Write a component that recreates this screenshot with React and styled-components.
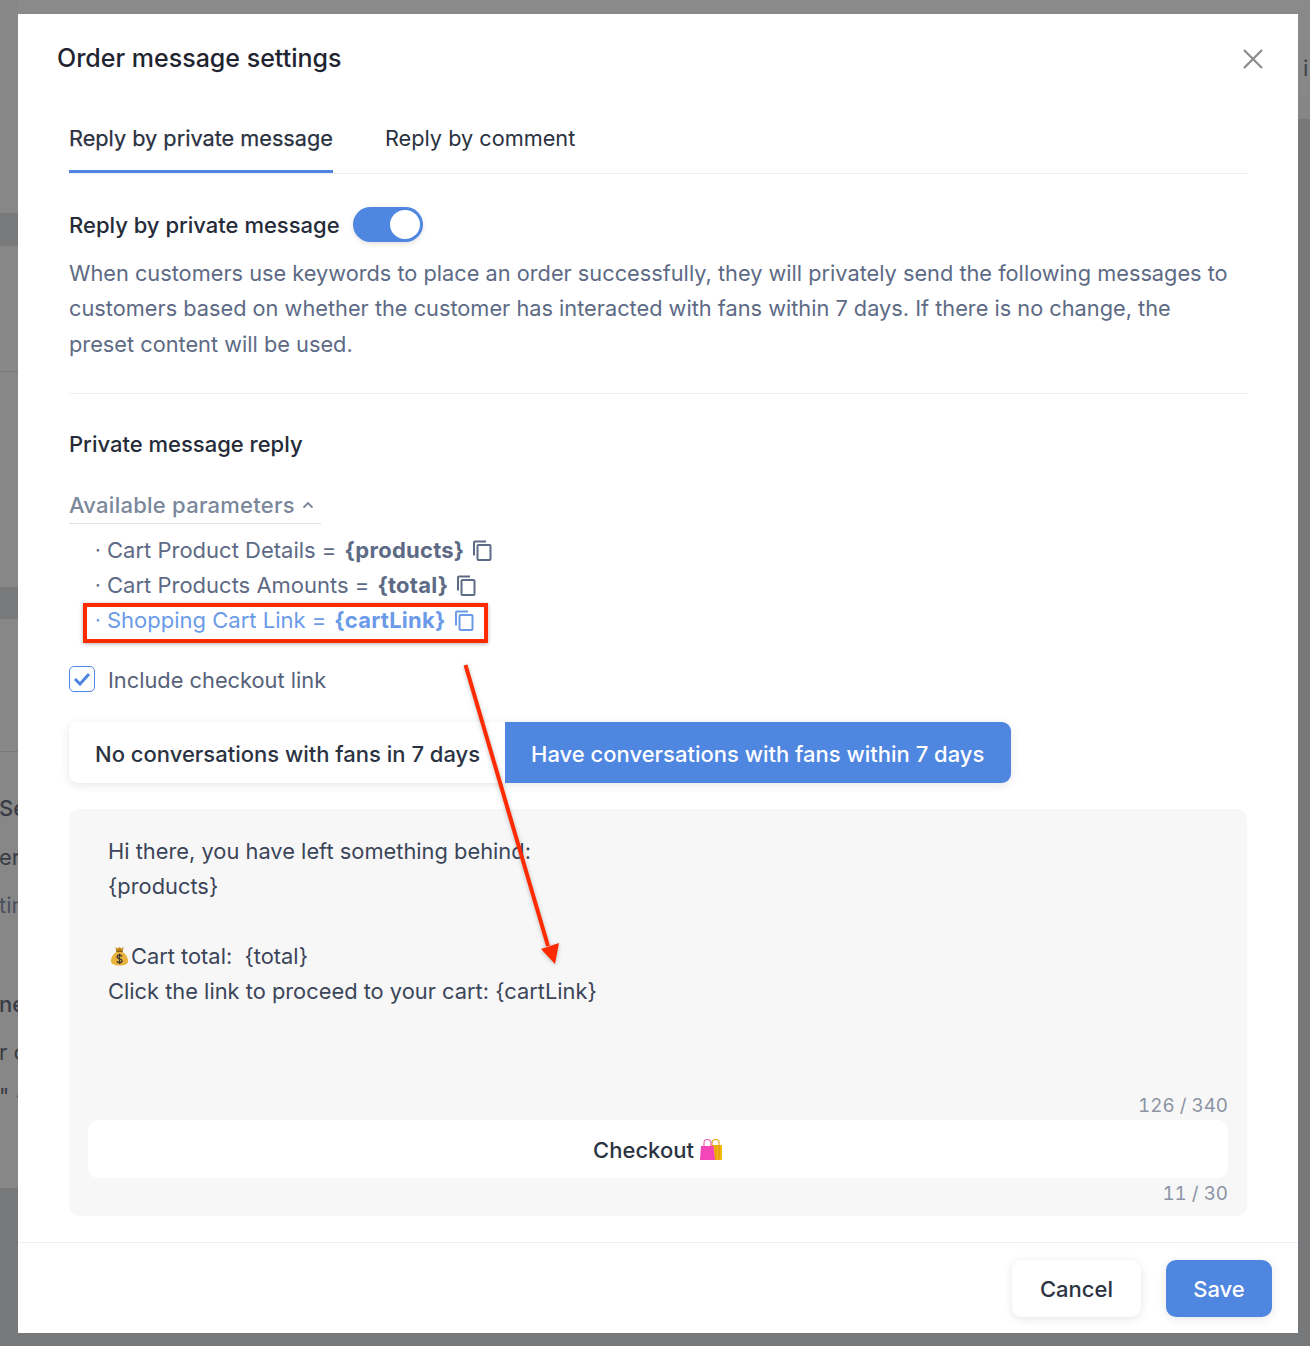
import styled, { createGlobalStyle } from "styled-components";

const blue = "#4f86e0";

const GlobalStyle = createGlobalStyle`
  html, body { margin: 0; padding: 0; }
  body { font-family: Inter, "Liberation Sans", sans-serif; }
  * { box-sizing: border-box; }
`;

const Page = styled.div`
  position: relative;
  width: 1310px;
  height: 1346px;
  display: grid;
  grid-template-columns: 18px 1280px 12px;
  overflow: hidden;
`;

const SideLeft = styled.div`
  display: flex;
  flex-direction: column;
  background: #878787;
  overflow: hidden;
  white-space: pre;
`;

const Band = styled.div`
  height: ${(p) => p.$h}px;
  margin-top: ${(p) => p.$top}px;
  background: #797a7c;
`;

const Rule = styled.div`
  height: 1px;
  margin-top: ${(p) => p.$top}px;
  background: #797979;
`;

const PeekText = styled.div`
  height: 30px;
  line-height: 30px;
  margin-top: ${(p) => p.$top}px;
  margin-left: -1px;
  font-size: 22px;
  font-weight: ${(p) => (p.$bold ? 500 : 400)};
  color: ${(p) => p.$color || "#383c46"};
`;

const BottomFill = styled.div`
  flex: 1;
  margin-top: ${(p) => p.$top || 0}px;
  background: #77787a;
`;

const Center = styled.div`
  display: flex;
  flex-direction: column;
`;

const TopStrip = styled.div`
  height: 14px;
  background: #8a8a8a;
`;

const SideRight = styled.div`
  display: flex;
  flex-direction: column;
  overflow: hidden;
`;

const SideRightTop = styled.div`
  height: 119px;
  padding: 54px 0 0 5px;
  background: linear-gradient(#8a8a8a, #868686);
  font-size: 22px;
  line-height: 28px;
  color: #3e424c;
`;

const Modal = styled.div`
  width: 1280px;
  height: 1319px;
  background: #fff;
  border-radius: 9px;
  display: flex;
  flex-direction: column;
`;

const Header = styled.div`
  height: 88px;
  flex: none;
  padding: 0 35px 0 39px;
  display: flex;
  align-items: center;
  justify-content: space-between;
`;

const Title = styled.div`
  font-size: 25px;
  font-weight: 500;
  color: #1f2530;
`;

const CloseIcon = styled.svg`
  margin-top: 2px;
`;

const Body = styled.div`
  flex: 1;
  padding: 0 51px;
  display: flex;
  flex-direction: column;
`;

const TabBar = styled.div`
  height: 72px;
  flex: none;
  display: flex;
  gap: 52px;
  border-bottom: 1px solid #eceef1;
`;

const Tab = styled.div`
  height: 71px;
  padding-top: 1px;
  display: flex;
  align-items: center;
  font-size: 21.7px;
  font-weight: 400;
  color: #2a3140;
  -webkit-text-stroke: ${(p) => (p.$active ? "0.25px #2a3140" : "0")};
  box-shadow: ${(p) => (p.$active ? `inset 0 -3px 0 ${blue}` : "none")};
`;

const ToggleRow = styled.div`
  height: 35px;
  margin-top: 33px;
  flex: none;
  display: flex;
  align-items: center;
  gap: 13px;
`;

const Strong = styled.div`
  font-size: 22px;
  font-weight: 500;
  color: #252b38;
`;

const Switch = styled.div`
  width: 70px;
  height: 35px;
  border-radius: 18px;
  background: ${blue};
  padding: 3px;
  display: flex;
  justify-content: flex-end;
  box-shadow: 0 2px 5px rgba(0, 0, 0, 0.12);
`;

const Knob = styled.div`
  width: 30px;
  height: 29px;
  border-radius: 50%;
  background: #fff;
`;

const Description = styled.p`
  margin: 14px 0 0;
  max-width: 1165px;
  font-size: 21.75px;
  line-height: 35.3px;
  color: #5d6a85;
`;

const Divider = styled.div`
  height: 1px;
  flex: none;
  margin-top: 31px;
  background: #eceef1;
`;

const SectionTitle = styled(Strong)`
  height: 30px;
  line-height: 30px;
  margin-top: 35px;
`;

const ParamsToggle = styled.div`
  width: 252px;
  height: 35px;
  margin-top: 30px;
  flex: none;
  display: flex;
  align-items: center;
  gap: 7px;
  padding-bottom: 2px;
  border-bottom: 1px solid #dde3ea;
  font-size: 22px;
  font-weight: 500;
  letter-spacing: 0.25px;
  color: #7b879b;
`;

const ParamList = styled.div`
  margin-top: 9px;
  display: flex;
  flex-direction: column;
`;

const ParamRow = styled.div`
  height: 35px;
  display: flex;
  align-items: center;
  padding-left: 26px;
  font-size: 22px;
  white-space: pre;
  color: ${(p) => (p.$highlight ? "#6b9be8" : "#5d6a85")};
`;

const Dot = styled.span`
  width: 12px;
  font-size: 20px;
`;

const ParamName = styled.b`
  font-weight: 700;
  letter-spacing: 0.25px;
  margin-left: 8px;
`;

const CopyWrap = styled.span`
  margin-left: 8px;
  display: flex;
`;

const CheckRow = styled.div`
  height: 35px;
  margin-top: 25px;
  flex: none;
  display: flex;
  align-items: center;
  gap: 13px;
  font-size: 21.8px;
  color: #56627a;
`;

const CheckBox = styled.div`
  width: 26px;
  height: 26px;
  margin-bottom: 2px;
  border: 1.5px solid ${blue};
  border-radius: 5px;
  display: flex;
  align-items: center;
  justify-content: center;
`;

const Segments = styled.div`
  margin-top: 24px;
  height: 61px;
  flex: none;
  display: flex;
  width: 942px;
  border-radius: 9px;
  box-shadow: 0 2px 10px rgba(0, 0, 0, 0.1);
`;

const Segment = styled.div`
  display: flex;
  align-items: center;
  padding: 4px 0 0 26px;
  font-size: 22px;
  font-weight: 500;
  width: ${(p) => p.$w}px;
  color: ${(p) => (p.$active ? "#fff" : "#2b3342")};
  background: ${(p) => (p.$active ? blue : "#fff")};
  border-radius: ${(p) => (p.$active ? "0 9px 9px 0" : "9px 0 0 9px")};
`;

const Panel = styled.div`
  margin-top: 26px;
  height: 407px;
  flex: none;
  padding: 25px 19px 13px;
  border-radius: 10px;
  background: #f7f7f8;
  display: flex;
  flex-direction: column;
`;

const Message = styled.div`
  height: 261px;
  flex: none;
  padding-left: 20px;
  font-size: 21.85px;
  line-height: 35px;
  color: #3b4558;
`;

const MessageLine = styled.div`
  height: 35px;
  display: flex;
  align-items: center;
  white-space: pre;
`;

const Counter = styled.div`
  height: 20px;
  padding-top: 1px;
  line-height: 20px;
  text-align: right;
  font-size: 18.8px;
  font-variant-numeric: tabular-nums;
  color: #8b94a3;
`;

const CheckoutBox = styled.div`
  margin: 5px 0;
  height: 58px;
  flex: none;
  padding-top: 2px;
  border-radius: 10px;
  background: #fff;
  display: flex;
  align-items: center;
  justify-content: center;
  gap: 5px;
  font-size: 22px;
  font-weight: 500;
  color: #2b3342;
`;

const Footer = styled.div`
  height: 91px;
  flex: none;
  padding: 17px 26px 0;
  border-top: 1px solid #eceef1;
  display: flex;
  justify-content: flex-end;
  gap: 25px;
`;

const Button = styled.div`
  height: 57px;
  width: ${(p) => p.$w}px;
  border-radius: 10px;
  display: flex;
  align-items: center;
  justify-content: center;
  font-size: 22px;
  font-weight: 500;
  color: ${(p) => (p.$primary ? "#fff" : "#2b3342")};
  background: ${(p) => (p.$primary ? blue : "#fff")};
  box-shadow: 0 2px 10px rgba(0, 0, 0, 0.1);
`;

const RedBox = styled.div`
  position: absolute;
  left: 83px;
  top: 603px;
  width: 405px;
  height: 40px;
  border: 4px solid #ff2a00;
  box-shadow: 0 1px 4px rgba(0, 0, 0, 0.3);
`;

const Arrow = styled.svg`
  position: absolute;
  left: 450px;
  top: 650px;
  filter: drop-shadow(0 1px 2px rgba(0, 0, 0, 0.25));
`;

const BagSvg = styled.svg`
  margin: 0 2px 0 2px;
`;

const CopyIcon = () => (
  <svg width="20" height="21" viewBox="0 0 20 21" fill="none" stroke="currentColor" strokeWidth="2">
    <path d="M2 15.5V2.5a1 1 0 0 1 1-1h11" />
    <rect x="5.5" y="5" width="13" height="15" rx="1" />
  </svg>
);

const MoneyBag = () => (
  <BagSvg width="19" height="22" viewBox="0 0 20 21" aria-label="money bag">
    <path d="M5.5 1 8 2.500 10 1l2 1.500L14.500 1 13 6H7z" fill="#c98a1e" />
    <path d="M7 6h6c4 2.500 6 6.500 6 9.500 0 3.500-3 5-9 5s-9-1.500-9-5C1 12.500 3 8.500 7 6z" fill="#e8b23c" />
    <path d="M6.500 5.500h7" stroke="#8a5a12" strokeWidth="1.400" />
    <path d="M12.600 10.800c-.6-.9-1.500-1.200-2.600-1.200-1.500 0-2.500.7-2.500 1.900 0 2.600 5.200 1.300 5.200 3.900 0 1.200-1.100 2-2.700 2-1.200 0-2.200-.4-2.800-1.300M10 8v11" fill="none" stroke="#3f3a33" strokeWidth="1.400" />
  </BagSvg>
);

const ShoppingBags = () => (
  <svg width="24" height="22" viewBox="0 0 24 22" aria-label="shopping bags">
    <path d="M13 7V4a3.500 3.500 0 0 1 7 0v3" fill="none" stroke="#e6a91f" strokeWidth="1.200" />
    <rect x="11" y="6" width="12" height="15" fill="#f2b90f" />
    <path d="M14 6v15M17 6v15M20 6v15" stroke="#e08a12" strokeWidth="1" />
    <path d="M5 9V4a3.500 3.500 0 0 1 7 0v5" fill="none" stroke="#ef6cb8" strokeWidth="1.200" />
    <path d="M2 7h12.500L16 21H1z" fill="#f546b8" />
  </svg>
);

const params = [
  { label: "Cart Product Details =", name: "{products}" },
  { label: "Cart Products Amounts =", name: "{total}" },
  { label: "Shopping Cart Link =", name: "{cartLink}", highlight: true },
];

export default function App() {
  return (
    <Page>
      <GlobalStyle />
      <SideLeft>
        <Band $top={213} $h={33} />
        <Rule $top={125} />
        <Band $top={215} $h={32} />
        <Rule $top={132} />
        <PeekText $top={41} $bold>Se</PeekText>
        <PeekText $top={19}>er</PeekText>
        <PeekText $top={18} $color="#4c5160">tin</PeekText>
        <PeekText $top={69} $bold>ne</PeekText>
        <PeekText $top={18}>r c</PeekText>
        <PeekText $top={14}>{'" ·'}</PeekText>
        <BottomFill $top={77} />
      </SideLeft>

      <Center>
        <TopStrip />
        <Modal>
          <Header>
            <Title>Order message settings</Title>
            <CloseIcon width="20" height="20" viewBox="0 0 20 20" stroke="#8b8b8b" strokeWidth="2.200">
              <path d="M1 1l18 18M19 1L1 19" />
            </CloseIcon>
          </Header>
          <Body>
            <TabBar>
              <Tab $active>Reply by private message</Tab>
              <Tab>Reply by comment</Tab>
            </TabBar>
            <ToggleRow>
              <Strong>Reply by private message</Strong>
              <Switch><Knob /></Switch>
            </ToggleRow>
            <Description>
              When customers use keywords to place an order successfully, they will privately send the following messages to customers based on whether the customer has interacted with fans within 7 days. If there is no change, the preset content will be used.
            </Description>
            <Divider />
            <SectionTitle>Private message reply</SectionTitle>
            <ParamsToggle>
              Available parameters
              <svg width="12" height="8" viewBox="0 0 12 8" fill="none" stroke="#7b879b" strokeWidth="1.800">
                <path d="M1.500 6.500L6 2l4.500 4.500" />
              </svg>
            </ParamsToggle>
            <ParamList>
              {params.map((item) => (
                <ParamRow key={item.name} $highlight={item.highlight}>
                  <Dot>·</Dot>
                  {item.label}
                  <ParamName>{item.name}</ParamName>
                  <CopyWrap><CopyIcon /></CopyWrap>
                </ParamRow>
              ))}
            </ParamList>
            <CheckRow>
              <CheckBox>
                <svg width="18" height="14" viewBox="0 0 18 14" fill="none" stroke={blue} strokeWidth="3">
                  <path d="M2 7l5 5 9-10" />
                </svg>
              </CheckBox>
              Include checkout link
            </CheckRow>
            <Segments>
              <Segment $w={436}>No conversations with fans in 7 days</Segment>
              <Segment $w={506} $active>Have conversations with fans within 7 days</Segment>
            </Segments>
            <Panel>
              <Message>
                <MessageLine>Hi there, you have left something behind:</MessageLine>
                <MessageLine>{"{products}"}</MessageLine>
                <MessageLine />
                <MessageLine><MoneyBag />{"Cart total:  {total}"}</MessageLine>
                <MessageLine>{"Click the link to proceed to your cart: {cartLink}"}</MessageLine>
              </Message>
              <Counter>126 / 340</Counter>
              <CheckoutBox>Checkout <ShoppingBags /></CheckoutBox>
              <Counter>11 / 30</Counter>
            </Panel>
          </Body>
          <Footer>
            <Button $w={129}>Cancel</Button>
            <Button $w={106} $primary>Save</Button>
          </Footer>
        </Modal>
        <BottomFill />
      </Center>

      <SideRight>
        <SideRightTop>i</SideRightTop>
        <BottomFill />
      </SideRight>

      <RedBox />
      <Arrow width="120" height="330" viewBox="0 0 120 330">
        <path d="M15.500 15L98 296" stroke="#ff2a00" strokeWidth="4" fill="none" />
        <path d="M91 299L109 293 105 314z" fill="#ff2a00" />
      </Arrow>
    </Page>
  );
}
